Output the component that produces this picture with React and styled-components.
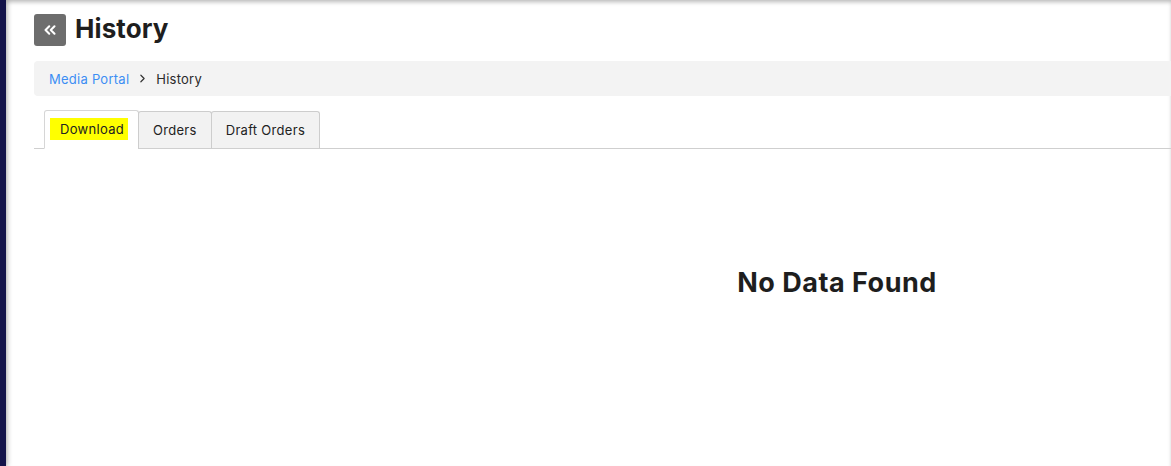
import styled, { createGlobalStyle } from "styled-components";
import { ChevronsLeft, ChevronRight } from "lucide-react";

const GlobalStyle = createGlobalStyle`
  html, body {
    margin: 0;
    padding: 0;
    height: 100%;
    overflow: hidden;
  }
  body {
    font-family: Inter, "Liberation Sans", sans-serif;
    background: #13134a;
  }
`;

const Shell = styled.div`
  display: flex;
  height: 466px;
`;

const SideStrip = styled.aside`
  width: 6px;
  flex-shrink: 0;
  background: #13134a;
  position: relative;
  z-index: 1;
  box-shadow: 2px 0 5px rgba(0, 0, 0, 0.22);
`;

const Main = styled.main`
  flex: 1;
  background: #fff;
  overflow: hidden;
  box-shadow: inset 0 3px 4px -1px rgba(0, 0, 0, 0.28);
`;

const Content = styled.section`
  width: 1606px;
  padding: 14px 0 0 28px;
  display: flex;
  flex-direction: column;
`;

const TitleRow = styled.header`
  display: flex;
  align-items: center;
  gap: 9px;
  height: 32px;
`;

const BackButton = styled.button`
  width: 32px;
  height: 32px;
  border: none;
  border-radius: 3px;
  background: #6d6d6d;
  color: #fff;
  display: flex;
  align-items: center;
  justify-content: center;
  padding: 0;
`;

const Title = styled.h1`
  margin: -3px 0 0;
  font-size: 26px;
  font-weight: 700;
  color: #1e1e1e;
  letter-spacing: 0.1px;
`;

const Breadcrumb = styled.nav`
  margin-top: 15px;
  height: 35px;
  background: #f3f3f3;
  border-radius: 4px;
  display: flex;
  align-items: center;
  gap: 7px;
  padding-left: 15px;
  font-size: 13px;
  letter-spacing: 0.25px;
`;

const Crumb = styled.span`
  color: ${({ $link }) => ($link ? "#3c8ef3" : "#2a2a2a")};
`;

const Sep = styled.span`
  display: flex;
  color: #333;
`;

const TabBar = styled.div`
  margin-top: 14px;
  display: flex;
  align-items: flex-end;
  padding-left: 10px;
  border-bottom: 1px solid #cfcfcf;
  height: 38px;
`;

const Tab = styled.div`
  height: ${({ $active }) => ($active ? "39px" : "38px")};
  box-sizing: border-box;
  margin-bottom: -1px;
  border: 1px solid ${({ $active }) => ($active ? "#d6d6d6" : "#cdcdcd")};
  border-bottom: ${({ $active }) => ($active ? "1px solid #fff" : "1px solid #cfcfcf")};
  border-radius: 3px 3px 0 0;
  background: ${({ $active }) => ($active ? "#fff" : "#f2f2f2")};
  display: flex;
  align-items: center;
  padding: 0 ${({ $active }) => ($active ? "14px" : "14px")} 1px;
  font-size: 13px;
  letter-spacing: 0.3px;
  color: #222;
  & + & {
    margin-left: -1px;
  }
`;

const Highlight = styled.span`
  background: #ffff00;
  padding: 3px 4px 3px 10px;
  margin-left: -9px;
  margin-right: -4px;
`;

const Empty = styled.div`
  height: 150px;
  display: flex;
  align-items: flex-end;
  justify-content: center;
`;

const EmptyText = styled.h2`
  margin: 0;
  font-size: 27px;
  font-weight: 700;
  letter-spacing: 0.5px;
  color: #1e1e1e;
`;

const tabs = ["Download", "Orders", "Draft Orders"];

export default function App() {
  return (
    <>
      <GlobalStyle />
      <Shell>
        <SideStrip />
        <Main>
          <Content>
            <TitleRow>
              <BackButton aria-label="Back">
                <ChevronsLeft size={18} strokeWidth={2.8} />
              </BackButton>
              <Title>History</Title>
            </TitleRow>
            <Breadcrumb>
              <Crumb $link>Media Portal</Crumb>
              <Sep>
                <ChevronRight size={13} strokeWidth={2.2} />
              </Sep>
              <Crumb>History</Crumb>
            </Breadcrumb>
            <TabBar>
              {tabs.map((t, i) => (
                <Tab key={t} $active={i === 0}>
                  {i === 0 ? <Highlight>{t}</Highlight> : t}
                </Tab>
              ))}
            </TabBar>
            <Empty>
              <EmptyText>No Data Found</EmptyText>
            </Empty>
          </Content>
        </Main>
      </Shell>
    </>
  );
}
